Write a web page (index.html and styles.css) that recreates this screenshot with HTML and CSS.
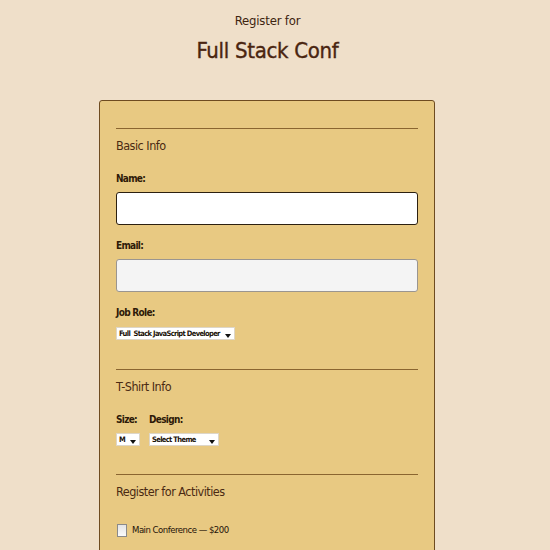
FILE: index.html
```html
<!DOCTYPE html>
<html>
<head>
<meta charset="utf-8">
<link rel="stylesheet" href="styles.css">
</head>
<body>
<header class="header">
  <div class="pre">Register for</div>
  <h1 class="title">Full Stack Conf</h1>
</header>
<form class="card">
  <section class="group group-basic">
    <h2 class="legend">Basic Info</h2>
    <label class="label">Name:</label>
    <div class="input input-focus"></div>
    <label class="label">Email:</label>
    <div class="input input-gray"></div>
    <label class="label label-job">Job Role:</label>
    <div class="select sel-job"><span>Full&nbsp; Stack JavaScript Developer</span><i class="arrow"></i></div>
  </section>
  <section class="group group-shirt">
    <h2 class="legend">T-Shirt Info</h2>
    <div class="shirt">
      <div class="col">
        <label class="label">Size:</label>
        <div class="select sel-size"><span>M</span><i class="arrow"></i></div>
      </div>
      <div class="col">
        <label class="label">Design:</label>
        <div class="select sel-design"><span>Select Theme</span><i class="arrow"></i></div>
      </div>
    </div>
  </section>
  <section class="group">
    <h2 class="legend">Register for Activities</h2>
    <div class="check-row"><span class="checkbox"></span><span class="check-label">Main Conference — $200</span></div>
  </section>
</form>
</body>
</html>
```
FILE: styles.css
```css
html, body { margin: 0; padding: 0; }
body {
  background: #efdfc9;
  font-family: "DejaVu Sans Condensed", "DejaVu Sans", sans-serif;
  color: #4a2a12;
  height: 550px;
  overflow: hidden;
}
.header { width: 535px; text-align: center; padding-top: 12px; }
.pre { font-size: 13px; line-height: 18px; color: #3e2410; letter-spacing: -0.2px; }
.title { margin: 5px 0 0; font-size: 22px; line-height: 32px; font-weight: normal; color: #4a2510; letter-spacing: -0.3px; -webkit-text-stroke: 0.35px #4a2510; }
.card {
  margin: 33px 0 0 99px;
  width: 302px;
  padding: 27px 16px 40px;
  background: #e8c982;
  border: 1px solid #6e4b20;
  border-radius: 3px;
}
.group { border-top: 1px solid #8a6530; padding-top: 9px; }
.group-basic { padding-bottom: 29px; }
.group-shirt { padding-bottom: 28px; }
.legend { margin: 0 0 19px; font-size: 12.5px; line-height: 16px; font-weight: normal; color: #4a2a12; letter-spacing: -0.5px; }
.label { display: block; font-size: 10px; line-height: 12px; font-weight: bold; color: #2e1a08; margin-bottom: 7px; letter-spacing: -0.7px; }
.label-job { margin-bottom: 8px; }
.input { height: 31px; border-radius: 3px; margin-bottom: 15px; }
.input-focus { background: #fff; border: 1px solid #2c2010; }
.input-gray { background: #f4f4f4; border: 1px solid #9a9590; }
.select {
  display: flex; align-items: center; position: relative;
  height: 13px; background: #fff; border: 1px solid #ddd6c8; box-sizing: border-box;
  font-size: 7.5px; line-height: 11px; font-weight: bold; color: #1a1208; padding-left: 2px;
  letter-spacing: -0.65px; white-space: nowrap; overflow: hidden;
}
.arrow {
  position: absolute; right: 3px; top: 6px;
  width: 0; height: 0; border-left: 3px solid transparent; border-right: 3px solid transparent; border-top: 4px solid #111;
}
.sel-job { width: 119px; }
.shirt { display: flex; gap: 9px; }
.sel-size { width: 24px; }
.sel-design { width: 70px; }
.check-row { display: flex; align-items: center; gap: 5px; margin-top: 23px; height: 14px; padding-left: 1px; }
.checkbox { width: 8px; height: 11px; background: linear-gradient(#e4e4e4, #fafafa); border: 1px solid #8a8a8a; }
.check-label { font-size: 9.5px; line-height: 14px; color: #1e1208; letter-spacing: -0.5px; }
```
